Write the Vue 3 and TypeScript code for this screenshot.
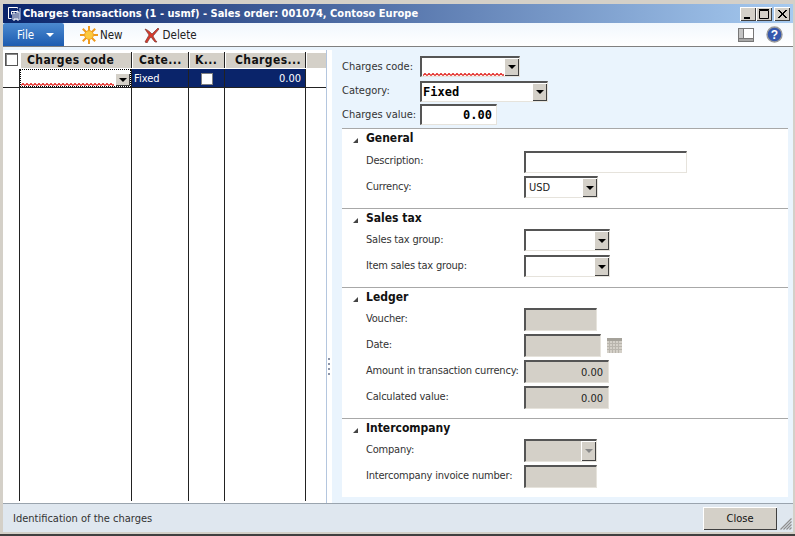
<script setup lang="ts">
interface Field { label: string; kind: string; width: number; value?: string }
interface Section { title: string; lead: number; pitch: number; height: number; h: number; fields: Field[] }
const sections: Section[] = [
  { title: 'General', lead: 22, pitch: 3, height: 80, h: 22, fields: [
    { label: 'Description:', kind: 'text', width: 163 },
    { label: 'Currency:', kind: 'combo', width: 74, value: 'USD' } ] },
  { title: 'Sales tax', lead: 20, pitch: 4, height: 79, h: 22, fields: [
    { label: 'Sales tax group:', kind: 'combo', width: 86 },
    { label: 'Item sales tax group:', kind: 'combo', width: 86 } ] },
  { title: 'Ledger', lead: 20, pitch: 3, height: 131, h: 23, fields: [
    { label: 'Voucher:', kind: 'ro', width: 73 },
    { label: 'Date:', kind: 'date', width: 77 },
    { label: 'Amount in transaction currency:', kind: 'ro', width: 85, value: '0.00' },
    { label: 'Calculated value:', kind: 'ro', width: 85, value: '0.00' } ] },
  { title: 'Intercompany', lead: 20, pitch: 3, height: 79, h: 23, fields: [
    { label: 'Company:', kind: 'rocombo', width: 73 },
    { label: 'Intercompany invoice number:', kind: 'ro', width: 73 } ] },
]
</script>

<template>
  <div class="window">
    <header class="titlebar">
      <svg class="appicon" width="15" height="15" viewBox="0 0 15 15">
        <path d="M1.5 1.5h9v1M1.5 1.5v11h3M10.5 4.5v1h-6v3" fill="none" stroke="#fff" />
        <path d="M6 7h2v7H6zM10 6h2v8h-2zM7 13h4" fill="none" stroke="#fff" />
        <path d="M13 2v12" stroke="#c8d4ec" />
      </svg>
      <span class="titletext">Charges transactions (1 - usmf) - Sales order: 001074, Contoso Europe</span>
      <div class="winbtns">
        <button class="winbtn"><svg width="16" height="14"><rect x="4" y="10" width="6" height="2" fill="#000" /></svg></button>
        <button class="winbtn"><svg width="16" height="14"><path d="M3.5 3.5h9v8h-9z M3 2.5h10" fill="none" stroke="#000" /></svg></button>
        <button class="winbtn close"><svg width="16" height="14"><path d="M4 3l8 8M5 3l8 8M12 3l-8 8M13 3l-8 8" stroke="#000" fill="none" /></svg></button>
      </div>
    </header>

    <nav class="toolbar">
      <div class="filebtn"><span>File</span><i class="caret white"></i></div>
      <div class="tool">
        <svg width="18" height="18" viewBox="0 0 18 18">
          <g stroke="#ef9a1c" stroke-width="2"><path d="M9 0v18M0 9h18M2.8 2.8l12.4 12.4M15.2 2.8L2.8 15.2" /></g>
          <circle cx="9" cy="9" r="4.4" fill="#fcc93e" stroke="#f0a024" />
        </svg>
        <span>New</span>
      </div>
      <div class="tool del">
        <svg width="16" height="16" viewBox="0 0 16 16">
          <path d="M1 2c3 1 5 3 7 5 2-2 4-4 6-6l1 1c-2 2-4 5-6 7 1 2 2 4 4 6l-2 0C9 13 8 11 7 10c-2 2-3 4-4 6l-2-1c1-2 3-5 4-7C4 6 2 4 1 2z" fill="#d8392b" stroke="#7a3a32" stroke-width=".7" />
        </svg>
        <span>Delete</span>
      </div>
      <div class="toolright">
        <svg width="16" height="16" viewBox="0 0 16 16">
          <rect x="0.5" y="1.5" width="15" height="13" fill="#fff" stroke="#777" />
          <rect x="0.5" y="1.5" width="5" height="13" fill="#c4c4c4" stroke="#777" />
          <rect x="0.5" y="11.5" width="15" height="3" fill="#a8a8a8" stroke="#777" />
        </svg>
        <svg width="17" height="17" viewBox="0 0 17 17">
          <circle cx="8.5" cy="8.5" r="7.5" fill="#3557ad" stroke="#9a9a9a" stroke-width="1.4" />
          <text x="8.5" y="12.6" text-anchor="middle" font-size="12" font-weight="700" fill="#fff" font-family="Liberation Sans, sans-serif">?</text>
        </svg>
      </div>
    </nav>

    <main class="body">
      <section class="grid">
        <div class="gridhead">
          <span class="selectall"></span>
          <div class="hcell c1 p7">Charges code</div>
          <div class="hcell c2 p7">Cate...</div>
          <div class="hcell c3 p6">K...</div>
          <div class="hcell c4 p10">Charges...</div>
          <div class="hcell c5"></div>
        </div>
        <div class="gridrow">
          <div class="rowgut"></div>
          <div class="rcell c1">
            <div class="dots">
              <svg class="squiggle" width="93" height="3">
                <defs><pattern id="sq" width="4" height="3" patternUnits="userSpaceOnUse"><path d="M0 2.5L2 .5L4 2.5" stroke="#e0201c" stroke-width="1.2" fill="none" /></pattern></defs>
                <rect width="93" height="3" fill="url(#sq)" />
              </svg>
              <span class="dropbtn small"><i class="caret"></i></span>
            </div>
          </div>
          <div class="rcell c2 sel">Fixed</div>
          <div class="rcell c3 sel"><span class="check"></span></div>
          <div class="rcell c4 sel num">0.00</div>
        </div>
        <div class="gridfill">
          <div class="fill gut"></div>
          <div class="fill c1"></div>
          <div class="fill c2"></div>
          <div class="fill c3"></div>
          <div class="fill c4"></div>
        </div>
      </section>

      <div class="splitter"><span></span><span></span><span></span><span></span></div>

      <section class="panel">
        <div class="head">
          <div class="hrow r1">
            <label>Charges code:</label>
            <div class="input combo req w100">
              <svg class="squiggle2" width="84" height="3">
                <rect width="84" height="3" fill="url(#sq)" />
              </svg>
              <span class="dropbtn"><i class="caret"></i></span>
            </div>
          </div>
          <div class="hrow r2">
            <label>Category:</label>
            <div class="input combo w128 bold"><span class="val">Fixed</span><span class="dropbtn"><i class="caret"></i></span></div>
          </div>
          <div class="hrow r3">
            <label>Charges value:</label>
            <div class="input w77 bold num"><span class="val">0.00</span></div>
          </div>
        </div>

        <div v-for="s in sections" :key="s.title" class="sec" :style="{ height: s.height + 'px' }">
          <div class="sectitle" :style="{ height: s.lead + 'px' }">
            <i class="tri"></i><span>{{ s.title }}</span>
          </div>
          <div v-for="f in s.fields" :key="f.label" class="frow" :class="'k-' + f.kind" :style="{ height: s.h + 'px', marginBottom: s.pitch + 'px' }">
            <label>{{ f.label }}</label>
            <div class="input" :class="{ ro: f.kind !== 'text' && f.kind !== 'combo', num: !!f.value && f.kind === 'ro' }" :style="{ width: f.width + 'px' }">
              <span v-if="f.value" class="val">{{ f.value }}</span>
              <span v-if="f.kind === 'combo'" class="dropbtn"><i class="caret"></i></span>
              <span v-if="f.kind === 'rocombo'" class="dropbtn dis"><i class="caret grey"></i></span>
            </div>
            <svg v-if="f.kind === 'date'" class="cal" width="15" height="15" viewBox="0 0 15 15">
              <rect width="15" height="15" fill="#d4d0c8" />
              <rect width="15" height="3" fill="#a5a29a" />
              <path d="M2.5 3v12M5.5 3v12M8.5 3v12M11.5 3v12M0 5.5h15M0 8.5h15M0 11.5h15" stroke="#b9b5ad" />
            </svg>
          </div>
        </div>
      </section>
    </main>

    <footer class="status">
      <span class="stext">Identification of the charges</span>
      <button class="closebtn">Close</button>
      <svg class="grip" width="12" height="12" viewBox="0 0 12 12">
        <path d="M11.5 .5L.5 11.5M11.5 3.5L3.5 11.5M11.5 6.5L6.5 11.5M11.5 9.5L9.5 11.5" stroke="#8f8f8f" stroke-width="1.2" fill="none" />
      </svg>
    </footer>
  </div>
</template>

<style>
html, body { margin: 0; overflow: hidden; }
</style>

<style scoped>
.window {
  width: 795px; height: 536px; box-sizing: border-box; background: #d4d0c8;
  padding: 4px 2px 2px 3px; display: flex; flex-direction: column;
  border-bottom: 2px solid #404040;
  font: 11px "DejaVu Sans Condensed", "Noto Sans", sans-serif; color: #222;
}
.titlebar {
  height: 19px; flex: none; display: flex; align-items: center; padding-left: 4px;
  background: linear-gradient(90deg, #0a246a, #a6caf0); color: #fff;
}
.appicon { flex: none; }
.titletext { margin-left: 1px; font-weight: 700; white-space: nowrap; }
.winbtns { margin-left: auto; display: flex; margin-right: 3px; }
.winbtn {
  width: 16px; height: 14px; padding: 0; box-sizing: content-box; background: #d4d0c8;
  border: none; box-shadow: inset 1px 1px #fff, inset -1px -1px #404040; display: block; margin-right: 0;
}
.winbtn svg { display: block; }
.close { margin-left: 2px; }
.toolbar {
  height: 24px; box-sizing: border-box; flex: none; display: flex; align-items: center;
  background: linear-gradient(#f1f7fd, #fff); border-bottom: 1px solid #808080;
  font-size: 11.5px;
}
.filebtn {
  width: 61px; height: 23px; align-self: flex-end; box-sizing: border-box; background: linear-gradient(#4c8ad0, #1c5bb0);
  color: #fff; display: flex; align-items: center; padding-left: 14px; gap: 12px; border-radius: 2px 2px 0 0;
}
.tool { display: flex; align-items: center; gap: 2px; margin-left: 16px; color: #222; }
.del { margin-left: 21px; gap: 3px; }
.toolright { margin-left: auto; display: flex; gap: 12px; margin-right: 10px; align-items: center; }
.caret { display: block; width: 0; height: 0; border: 4px solid transparent; border-top-color: #000; border-bottom: 0; }
.caret.white { border-top-color: #fff; }
.caret.grey { border-top-color: #888; }

.body { flex: 1; min-height: 0; display: flex; background: #eaf4fd; padding-top: 3px; }
.grid { width: 324px; box-sizing: border-box; flex: none; background: #fff; display: flex; flex-direction: column; border-right: 1px solid #b4c6de; }
.gridhead { height: 19px; display: flex; padding-top: 2px; box-sizing: border-box; flex: none; }
.selectall { width: 13px; height: 13px; box-sizing: border-box; margin: 1px 0 0 2px; border: 1px solid #555; background: #fff; flex: none; box-shadow: inset 1px 1px #888; }
.hcell {
  height: 16px; box-sizing: border-box; background: #d4d0c8; border-right: 1px solid #222; box-shadow: inset 1px 1px #fff;
  font-weight: 700; font-size: 12px; letter-spacing: 0.4px; line-height: 17px; color: #111; white-space: nowrap; overflow: hidden;
}
.p7 { padding-left: 7px; }
.p6 { padding-left: 6px; }
.p10 { padding-left: 10px; }
.c1 { width: 112px; flex: none; }
.c2 { width: 57px; flex: none; }
.c3 { width: 36px; flex: none; }
.c4 { width: 81px; flex: none; }
.c5 { width: 20px; flex: none; border-right: 0; }
.hcell.c1 { margin-left: 2px; }
.gridrow { height: 19px; display: flex; border-bottom: 1px solid #222; box-sizing: border-box; flex: none; }
.rowgut { width: 17px; flex: none; border-right: 1px solid #222; box-sizing: border-box; }
.rcell { box-sizing: border-box; display: flex; align-items: center; border-right: 1px solid #222; }
.dots { flex: 1; align-self: stretch; position: relative; border: 1px dotted #000; background: #fff; }
.sel { background: #0a246a; color: #fff; padding: 0 4px 0 2px; }
.rcell.c3 { justify-content: center; padding: 0; }
.check { width: 12px; height: 12px; margin-top: 1px; box-sizing: border-box; background: #fff; border: 1px solid #808080; }
.num { justify-content: flex-end; }
.squiggle { position: absolute; left: 0; bottom: 0; }
.squiggle2 { position: absolute; left: 1px; bottom: 0; }
.dropbtn {
  position: absolute; right: 0; top: 0; bottom: 0; width: 15px; background: #d4d0c8;
  box-shadow: inset 1px 1px #fff, inset -1px -1px #404040;
  display: flex; align-items: center; justify-content: center;
}
.dropbtn.small { top: 3px; }
.gridfill { flex: 1; display: flex; min-height: 0; padding-bottom: 2px; }
.fill { box-sizing: border-box; border-right: 1px solid #222; }
.gut { width: 17px; flex: none; }
.splitter {
  width: 15px; flex: none; display: flex; flex-direction: column; gap: 3px; box-sizing: border-box;
  padding: 308px 0 0 1px; background: linear-gradient(90deg, #fff 5px, #eaf4fd 5px);
}
.splitter span { width: 2px; height: 2px; background: #8d95a8; }
.panel { flex: 1; min-width: 0; display: flex; flex-direction: column; padding-right: 5px; }
.head { height: 78px; box-sizing: border-box; padding-top: 6px; flex: none; }
.hrow { height: 21px; margin-bottom: 3px; display: flex; align-items: center; }
.hrow.r1 { margin-bottom: 4px; }
.hrow.r2 { margin-bottom: 2px; }
.hrow label { width: 78px; flex: none; color: #333; padding-bottom: 1px; }
.hrow.r2 label { padding-bottom: 3px; }
.w100 { width: 100px; }
.w128 { width: 128px; }
.w77 { width: 77px; }
.input {
  position: relative; box-sizing: border-box; height: 100%; background: #fff; display: flex; align-items: center;
  border-style: solid; border-width: 2px 1px 1px 2px; border-color: #555 #e6e3dc #e6e3dc #555; padding: 0 3px; flex: none;
}
.input.ro { background: #d4d0c8; }
.input.num { justify-content: flex-end; padding-right: 5px; }
.bold { font: 700 12px "DejaVu Sans Mono", monospace; color: #000; padding: 0 1px; }
.input.bold.num { padding-right: 4px; }
.sec { border-top: 1px solid #a8a8a8; background: #fff; box-sizing: border-box; flex: none; padding-left: 24px; }
.sectitle { display: flex; align-items: flex-start; font-weight: 700; font-size: 12px; line-height: 19px; color: #111; position: relative; box-sizing: border-box; }
.tri { position: absolute; left: -13px; top: 9px; width: 0; height: 0; border-style: solid; border-width: 0 0 5px 5px; border-color: transparent transparent #444 transparent; }
.frow { display: flex; align-items: stretch; }
.frow label { width: 158px; flex: none; display: flex; align-items: center; padding-bottom: 2px; box-sizing: border-box; color: #333; white-space: nowrap; letter-spacing: -0.2px; }
.frow.k-text label { padding-bottom: 4px; }
.cal { align-self: center; margin-left: 6px; }
.status { height: 29px; flex: none; background: #dfe7ef; border-top: 1px solid #9aa4ae; display: flex; align-items: center; position: relative; box-sizing: border-box; }
.stext { margin-left: 10px; color: #333; }
.closebtn {
  margin-left: auto; margin-right: 16px; width: 74px; height: 23px; padding: 0; font: inherit; color: #111;
  background: #d4d0c8; border: none; box-shadow: inset 1px 1px #fff, inset -1px -1px #404040;
}
.grip { position: absolute; right: 1px; bottom: 2px; }
</style>
